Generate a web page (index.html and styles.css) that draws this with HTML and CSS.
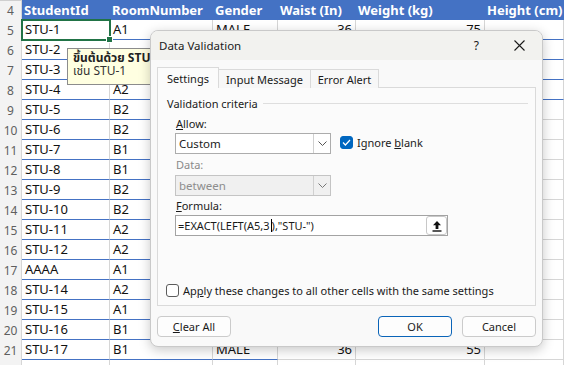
FILE: index.html
```html
<!DOCTYPE html>
<html>
<head>
<meta charset="utf-8">
<link rel="stylesheet" href="styles.css">
</head>
<body>
<div class="sheet">
  <div class="row hdr"><div class="rh">4</div><div class="c">StudentId</div><div class="c">RoomNumber</div><div class="c">Gender</div><div class="c">Waist (In)</div><div class="c">Weight (kg)</div><div class="c">Height (cm)</div></div>
  <div class="row"><div class="rh">5</div><div class="c b">STU-1</div><div class="c b">A1</div><div class="c b">MALE</div><div class="c g n">36</div><div class="c g n">75</div><div class="c b"></div></div>
  <div class="row"><div class="rh">6</div><div class="c b">STU-2</div><div class="c b"></div><div class="c b"></div><div class="c g"></div><div class="c g"></div><div class="c b"></div></div>
  <div class="row"><div class="rh">7</div><div class="c b">STU-3</div><div class="c b"></div><div class="c b"></div><div class="c g"></div><div class="c g"></div><div class="c b"></div></div>
  <div class="row"><div class="rh">8</div><div class="c b">STU-4</div><div class="c b">A2</div><div class="c b"></div><div class="c g"></div><div class="c g"></div><div class="c b"></div></div>
  <div class="row"><div class="rh">9</div><div class="c b">STU-5</div><div class="c b">B2</div><div class="c b"></div><div class="c g"></div><div class="c g"></div><div class="c g"></div></div>
  <div class="row"><div class="rh">10</div><div class="c b">STU-6</div><div class="c b">B2</div><div class="c b"></div><div class="c g"></div><div class="c g"></div><div class="c g"></div></div>
  <div class="row"><div class="rh">11</div><div class="c b">STU-7</div><div class="c b">B1</div><div class="c b"></div><div class="c g"></div><div class="c g"></div><div class="c g"></div></div>
  <div class="row"><div class="rh">12</div><div class="c b">STU-8</div><div class="c b">B1</div><div class="c b"></div><div class="c g"></div><div class="c g"></div><div class="c g"></div></div>
  <div class="row"><div class="rh">13</div><div class="c b">STU-9</div><div class="c b">B2</div><div class="c b"></div><div class="c g"></div><div class="c g"></div><div class="c g"></div></div>
  <div class="row"><div class="rh">14</div><div class="c b">STU-10</div><div class="c b">B2</div><div class="c b"></div><div class="c g"></div><div class="c g"></div><div class="c g"></div></div>
  <div class="row"><div class="rh">15</div><div class="c b">STU-11</div><div class="c b">A2</div><div class="c b"></div><div class="c g"></div><div class="c g"></div><div class="c g"></div></div>
  <div class="row"><div class="rh">16</div><div class="c b">STU-12</div><div class="c b">A2</div><div class="c b"></div><div class="c g"></div><div class="c g"></div><div class="c g"></div></div>
  <div class="row"><div class="rh">17</div><div class="c b">AAAA</div><div class="c b">A1</div><div class="c b"></div><div class="c g"></div><div class="c g"></div><div class="c g"></div></div>
  <div class="row"><div class="rh">18</div><div class="c b">STU-14</div><div class="c b">A2</div><div class="c b"></div><div class="c g"></div><div class="c g"></div><div class="c g"></div></div>
  <div class="row"><div class="rh">19</div><div class="c b">STU-15</div><div class="c b">A1</div><div class="c b"></div><div class="c g"></div><div class="c g"></div><div class="c g"></div></div>
  <div class="row"><div class="rh">20</div><div class="c b">STU-16</div><div class="c b">B1</div><div class="c b"></div><div class="c g"></div><div class="c g"></div><div class="c g"></div></div>
  <div class="row"><div class="rh">21</div><div class="c b">STU-17</div><div class="c b">B1</div><div class="c b">MALE</div><div class="c g n">36</div><div class="c g n">55</div><div class="c g"></div></div>
  <div class="row"><div class="rh"></div><div class="c g"></div><div class="c g"></div><div class="c g"></div><div class="c g"></div><div class="c g"></div><div class="c g"></div></div>
</div>

<div class="sel-cell"><span class="handle"></span></div>

<div class="tip">
  <div class="tip-title">ขึ้นต้นด้วย STU-</div>
  <div>เช่น STU-1</div>
</div>

<div class="dialog">
  <div class="titlebar">
    <span class="title">Data Validation</span>
    <span class="help">?</span>
    <svg class="close" width="11" height="11" viewBox="0 0 11 11"><path d="M0.5 0.5L10.5 10.5M10.5 0.5L0.5 10.5" stroke="#1a1a1a" stroke-width="1.1" fill="none"/></svg>
  </div>
  <div class="body">
    <div class="tabs">
      <div class="tab sel w1">Settings</div>
      <div class="tab w2">Input Message</div>
      <div class="tab w3">Error Alert</div>
    </div>
    <div class="panel">
      <div class="legend"><span>Validation criteria</span><span class="rule"></span></div>
      <div class="fields">
        <div class="lbl l-allow"><u>A</u>llow:</div>
        <div class="combo-row">
          <div class="combo"><span class="val">Custom</span><span class="drop"><svg width="9" height="5" viewBox="0 0 9 5"><path d="M0.5 0.5L4.5 4.5L8.5 0.5" stroke="#555" fill="none"/></svg></span></div>
          <label class="chk"><span class="box on"><svg width="9" height="7" viewBox="0 0 9 7"><path d="M1 3.5L3.4 6L8 1" stroke="#fff" stroke-width="1.2" fill="none"/></svg></span><span class="ctext">Ignore <u>b</u>lank</span></label>
        </div>
        <div class="lbl dis l-data">Data:</div>
        <div class="combo disabled"><span class="val">between</span><span class="drop"><svg width="9" height="5" viewBox="0 0 9 5"><path d="M0.5 0.5L4.5 4.5L8.5 0.5" stroke="#777" fill="none"/></svg></span></div>
        <div class="lbl l-formula"><u>F</u>ormula:</div>
        <div class="input"><span class="ftext">=EXACT(LEFT(A5,3<span class="caret"></span>),"STU-")</span>
          <span class="refbtn"><svg width="10" height="12" viewBox="0 0 10 12"><path d="M5 1L1 5.2H3.6V9H6.4V5.2H9Z" fill="#111"/><rect x="0.5" y="10.3" width="9" height="1.4" fill="#111"/></svg></span>
        </div>
      </div>
      <label class="chk apply"><span class="box"></span><span class="ctext">Ap<u>p</u>ly these changes to all other cells with the same settings</span></label>
    </div>
    <div class="buttons">
      <div class="btn"><span><u>C</u>lear All</span></div>
      <div class="spacer"></div>
      <div class="btn ok">OK</div>
      <div class="btn">Cancel</div>
    </div>
  </div>
</div>
</body>
</html>
```

FILE: styles.css
```css
html, body {
  margin: 0;
  padding: 0;
  width: 564px;
  height: 365px;
  overflow: hidden;
  background: #ffffff;
}

.sheet {
  font-family: "Noto Sans", sans-serif;
  font-size: 13px;
  color: #111;
}

.row {
  display: grid;
  grid-template-columns: 22px 88px 103px 65px 78px 129px 1fr;
  height: 20px;
}

.rh {
  background: #f3f3f3;
  border-right: 1px solid #d6d6d6;
  color: #5f5f5f;
  font-size: 12px;
  display: flex;
  align-items: center;
  justify-content: center;
  box-sizing: border-box;
}

.c {
  box-sizing: border-box;
  border-right: 1px solid #d6d6d6;
  border-bottom: 1px solid #d6d6d6;
  padding: 0 3px;
  display: flex;
  align-items: center;
  white-space: nowrap;
  overflow: hidden;
  line-height: 19px;
}

.c.b { border-bottom-color: #4472c4; }
.c.g { border-bottom-color: #d6d6d6; }
.c.n { justify-content: flex-end; }

.hdr .c {
  background: #4472c4;
  color: #fff;
  font-weight: bold;
  border-right: none;
  border-bottom: none;
  padding-left: 2px;
}

.hdr .rh { border-top: 1px solid #cfcfcf; }

.sel-cell {
  position: absolute;
  left: 21px;
  top: 19px;
  width: 90px;
  height: 22px;
  box-sizing: border-box;
  border: 2px solid #217346;
}

.handle {
  position: absolute;
  right: -4px;
  bottom: -4px;
  width: 5px;
  height: 5px;
  background: #217346;
  border: 1px solid #fff;
}

.tip {
  position: absolute;
  left: 67px;
  top: 48px;
  width: 100px;
  height: 37px;
  box-sizing: border-box;
  background: #ffffe1;
  border: 1px solid #8c8c8c;
  padding: 3px 0 0 5px;
  font-family: "Noto Sans Thai", "Leelawadee UI", "Tahoma", "Noto Sans", sans-serif;
  font-size: 12px;
  line-height: 13px;
  color: #333;
  white-space: nowrap;
}

.tip-title { font-weight: bold; color: #222; }

.dialog {
  position: absolute;
  left: 150px;
  top: 30px;
  width: 393px;
  height: 317px;
  box-sizing: border-box;
  background: #f9f9f9;
  border: 1px solid #c9c9c9;
  border-radius: 8px;
  box-shadow: 0 3px 12px rgba(0, 0, 0, 0.22);
  font-family: "Noto Sans", sans-serif;
  font-size: 11px;
  color: #1a1a1a;
  display: flex;
  flex-direction: column;
  overflow: hidden;
}

.titlebar {
  height: 29px;
  background: #f2f2ef;
  display: flex;
  align-items: center;
  padding-left: 8px;
  flex: none;
}

.title { font-size: 11.5px; }

.help {
  margin-left: auto;
  font-size: 12px;
  margin-right: 35px;
}

.close { margin-right: 17px; }

.body {
  padding: 0 6px;
  display: flex;
  flex-direction: column;
}

.tabs {
  display: flex;
  align-items: flex-end;
  height: 21px;
  margin-top: 7px;
  margin-bottom: -1px;
  position: relative;
  z-index: 1;
}

.tab {
  height: 19px;
  box-sizing: border-box;
  border: 1px solid #dadada;
  border-bottom: none;
  display: flex;
  align-items: center;
  justify-content: center;
  background: #f7f7f7;
  margin-left: -1px;
}

.tab.sel {
  height: 21px;
  background: #fbfbfb;
  margin-left: 0;
}

.w1 { width: 62px; }
.w2 { width: 93px; }
.w3 { width: 69px; }

.panel {
  height: 219px;
  box-sizing: border-box;
  border: 1px solid #dadada;
  background: #fbfbfb;
  padding: 7px 7px 0 8px;
}

.legend {
  display: flex;
  align-items: center;
  height: 16px;
  padding-left: 1px;
}

.rule {
  flex: 1;
  border-top: 1px solid #dedede;
  margin-left: 5px;
}

.fields {
  padding-left: 9px;
  display: flex;
  flex-direction: column;
  align-items: flex-start;
}

.lbl {
  height: 16px;
  line-height: 16px;
  padding-left: 1px;
}

.lbl.dis { color: #8a8a8a; }
.l-allow { margin-top: 5px; margin-bottom: 1px; }
.l-data { margin-top: 3px; margin-bottom: 2px; }
.l-formula { margin-top: 2px; margin-bottom: 1px; }

.combo-row {
  display: flex;
  align-items: center;
}

.combo {
  width: 156px;
  height: 21px;
  box-sizing: border-box;
  border: 1px solid #acacac;
  background: #fff;
  display: flex;
  align-items: stretch;
}

.combo .val {
  flex: 1;
  display: flex;
  align-items: center;
  padding-left: 3px;
  font-size: 11.5px;
}

.combo .drop {
  width: 16px;
  border-left: 1px solid #d0d0d0;
  display: flex;
  align-items: center;
  justify-content: center;
}

.combo.disabled {
  background: #f0f0f0;
  border-color: #c4c4c4;
  color: #8d8d8d;
}

.chk {
  display: flex;
  align-items: center;
  gap: 4px;
}

.ctext { white-space: nowrap; }

.combo-row .chk { margin-left: 9px; margin-top: -3px; }

.box {
  width: 13px;
  height: 13px;
  box-sizing: border-box;
  border: 1px solid #5c5c5c;
  border-radius: 3px;
  background: #fff;
  display: flex;
  align-items: center;
  justify-content: center;
}

.box.on {
  background: #0067c0;
  border-color: #0067c0;
}

.input {
  width: 273px;
  height: 21px;
  box-sizing: border-box;
  border: 1px solid #a3a3a3;
  background: #fff;
  display: flex;
  align-items: center;
  padding-left: 2px;
}

.ftext {
  flex: 1;
  font-size: 11px;
  display: flex;
  align-items: center;
  white-space: pre;
}

.caret {
  display: inline-block;
  width: 1px;
  height: 13px;
  background: #000;
  margin-left: 1px;
}

.refbtn {
  width: 21px;
  height: 19px;
  box-sizing: border-box;
  border: 1px solid #c8c8c8;
  border-radius: 3px;
  background: #fff;
  display: flex;
  align-items: center;
  justify-content: center;
}

.apply {
  margin-top: 47px;
}

.buttons {
  display: flex;
  margin-top: 10px;
  gap: 10px;
}

.spacer { flex: 1; }

.btn {
  width: 74px;
  height: 21px;
  box-sizing: border-box;
  border: 1px solid #cbcbcb;
  border-radius: 4px;
  background: #fdfdfd;
  display: flex;
  align-items: center;
  justify-content: center;
}

.btn.ok {
  border-color: #0a64b8;
}
```
